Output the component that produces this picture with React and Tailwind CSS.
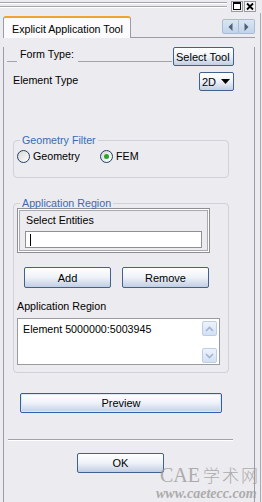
import React from "react";

const btn =
  "flex items-center justify-center rounded-[2px] border border-[#41628f] bg-linear-to-b from-white via-[#eef2f8] to-[#c2cee2] text-black";

function Radio({ checked, label, className = "" }) {
  return (
    <div className={`flex items-center ${className}`}>
      <span className="flex h-[13px] w-[13px] items-center justify-center rounded-full border border-[#1f3f6b] bg-linear-to-br from-[#d9d8d2] to-white">
        {checked && <span className="h-[5px] w-[5px] rounded-full bg-[#2aa52a]" />}
      </span>
      <span className="ml-[3px]">{label}</span>
    </div>
  );
}

function Groove() {
  return <div className="h-[2px] border-t border-b border-t-[#a5a5aa] border-b-white" />;
}

function ScrollBtn({ up }) {
  return (
    <div className="flex h-[15px] w-[15px] items-center justify-center rounded-[2px] border border-[#bccde6] bg-linear-to-b from-[#eef3fb] to-[#d3e0f3]">
      <svg width="9" height="6" viewBox="0 0 9 6">
        <path
          d={up ? "M1 5 L4.5 1.5 L8 5" : "M1 1 L4.5 4.5 L8 1"}
          fill="none"
          stroke="#a3b4cf"
          strokeWidth="1.6"
        />
      </svg>
    </div>
  );
}

export default function App() {
  return (
    <div className="relative h-[502px] w-[262px] overflow-hidden bg-[#ecebef] font-['Liberation_Sans',Arial,sans-serif] text-[10.7px] leading-[14px] text-black">
      {/* title strip */}
      <div className="flex h-[13px]">
        <div className="flex-1 pr-[4px] pt-[2px]">
          <Groove />
          <div className="mt-[2px]">
            <Groove />
          </div>
        </div>
        <svg width="12" height="11" viewBox="0 0 12 11" className="mt-px">
          <rect x="0.5" y="0.5" width="11" height="10" fill="#f4f4f6" stroke="#9a9aa0" />
          <rect x="2.5" y="1.5" width="7" height="7" fill="white" stroke="black" />
          <rect x="2" y="1" width="8" height="2" fill="black" />
        </svg>
        <svg width="12" height="11" viewBox="0 0 12 11" className="ml-px mr-[6px] mt-px">
          <rect x="0.5" y="0.5" width="11" height="10" fill="#f4f4f6" stroke="#9a9aa0" />
          <path d="M3 2.5 L9 8.5 M9 2.5 L3 8.5" stroke="black" strokeWidth="1.8" />
        </svg>
      </div>

      <div className="mr-px h-[489px] w-[261px] border-r border-[#a9a9b2]">
        {/* tab row */}
        <div className="ml-[3px] flex h-[25px] w-[252px]">
          <div className="mt-[3px] flex h-[22px] w-[128px] items-center rounded-t-[3px] border-x border-t-2 border-x-[#9c9ca6] border-t-[#f0a232] bg-[#fbfbfd] pl-[8px] pt-px">
            Explicit Application Tool
          </div>
          <div className="flex flex-1 justify-end border-b border-[#9c9ca6]">
            <div className="mt-[6px] flex h-[15px]">
              <div className="flex w-[17px] items-center justify-center rounded-l-[2px] border border-[#a9bcd6] bg-linear-to-b from-[#d9e5f4] to-[#c2d4ea]">
                <svg width="5" height="8" viewBox="0 0 5 8">
                  <path d="M4.5 0 L0.5 4 L4.5 8 Z" fill="#4f5e75" />
                </svg>
              </div>
              <div className="flex w-[16px] items-center justify-center rounded-r-[2px] border border-l-0 border-[#a9bcd6] bg-linear-to-b from-[#d9e5f4] to-[#c2d4ea]">
                <svg width="5" height="8" viewBox="0 0 5 8">
                  <path d="M0.5 0 L4.5 4 L0.5 8 Z" fill="#4f5e75" />
                </svg>
              </div>
            </div>
          </div>
        </div>

        {/* panel */}
        <div className="ml-[3px] h-[464px] w-[252px] border-x border-[#9c9ca6] pr-[20px]">
          {/* form type */}
          <div className="mt-[9px] flex items-start">
            <div className="ml-[3px] mt-[14px] h-px w-[10px] bg-[#a2a2a8]" />
            <span className="ml-[3px]">Form Type:</span>
            <div className="ml-[4px] mr-px mt-[14px] h-px flex-1 bg-[#a2a2a8]" />
            <div className={`${btn} h-[19px] w-[61px] justify-start pl-[2px] text-[11px]`}>Select Tool</div>
          </div>

          {/* element type */}
          <div className="mt-[6px] flex items-start justify-between pl-[9px]">
            <span className="mt-px">Element Type</span>
            <div className={`${btn} h-[19px] w-[35px] justify-start pl-[2px]`}>
              <span className="text-[11px]">2D</span>
              <svg width="9" height="5" viewBox="0 0 9 5" className="ml-[5px]">
                <path d="M0 0 H9 L4.5 5 Z" fill="black" />
              </svg>
            </div>
          </div>

          {/* geometry filter */}
          <fieldset className="ml-[9px] mt-[42px] w-[216px] rounded-[4px] border border-[#d2d0d8] px-0 pb-[14px]">
            <legend className="ml-[6px] px-[2px] text-[#3c6ab2]">Geometry Filter</legend>
            <div className="mt-[2px] flex items-center">
              <Radio label="Geometry" className="ml-[3px] w-[83px]" />
              <Radio label="FEM" checked />
            </div>
          </fieldset>

          {/* application region */}
          <fieldset className="ml-[9px] mt-[19px] w-[216px] rounded-[4px] border border-[#d2d0d8] px-0 pb-[7px]">
            <legend className="ml-[6px] px-[2px] leading-[12px] text-[#3c6ab2]">Application Region</legend>
            <div className="-mt-px ml-[3px] h-[45px] w-[193px] border border-[#8e8e94] px-[7px] pt-[4px] shadow-[inset_0_0_0_1px_#ffffff,inset_0_0_0_2px_#a9a9b0]">
              <div className="pl-px">Select Entities</div>
              <div className="mt-[4px] flex h-[17px] w-[177px] items-center border border-[#8f8f95] bg-white pl-[4px]">
                <div className="h-[12px] w-px bg-black" />
              </div>
            </div>

            <div className="ml-[10px] mt-[14px] flex gap-[11px]">
              <div className={`${btn} h-[21px] w-[87px] text-[11px]`}>Add</div>
              <div className={`${btn} h-[21px] w-[87px] text-[11px]`}>Remove</div>
            </div>

            <div className="ml-[3px] mt-[11px]">Application Region</div>
            <div className="ml-[3px] mt-[5px] flex h-[47px] w-[203px] border border-[#9a9aa0] bg-white">
              <div className="flex-1 pl-[5px] pt-[3px]">Element 5000000:5003945</div>
              <div className="mr-[2px] mt-[2px] flex flex-col justify-between pb-[1px]">
                <ScrollBtn up />
                <ScrollBtn />
              </div>
            </div>
          </fieldset>

          {/* preview */}
          <div className="ml-[16px] mt-[20px] flex h-[20px] w-[202px] items-center justify-center rounded-[2px] border border-[#2f5eab] bg-linear-to-b from-white via-[#eef2f9] to-[#c3d0e6] text-[11px] shadow-[inset_0_0_0_1px_#dfe7f5]">
            Preview
          </div>

          <div className="ml-[4px] mt-[26px] h-[2px] w-[225px] border-t border-b border-t-[#a2a2a8] border-b-white" />

          <div className={`${btn} ml-[73px] mt-[12px] h-[20px] w-[87px] text-[11px]`}>OK</div>
        </div>
      </div>

      {/* watermark */}
      <div className="pointer-events-none absolute bottom-[1px] left-[156px] flex flex-col items-start leading-none text-[#9c9c9c] opacity-80">
        <div className="ml-[4px] flex items-baseline font-['Liberation_Serif','Noto_Sans_CJK_SC',serif]">
          <span className="text-[20px]">CAE</span>
          <span className="ml-[3px] text-[17px] tracking-[2px] font-['Noto_Sans_CJK_SC',serif] font-light">学术网</span>
        </div>
        <div className="mt-[2px] font-['Liberation_Serif',serif] text-[14px] font-bold italic">www.caetecc.com</div>
      </div>
    </div>
  );
}
